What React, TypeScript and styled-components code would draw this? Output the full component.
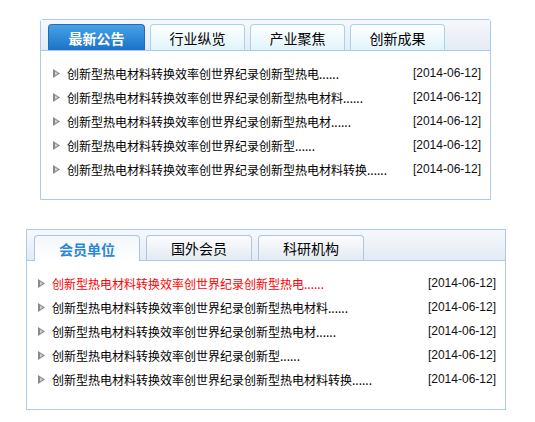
import React from 'react';
import styled, { createGlobalStyle, css } from 'styled-components';

const GlobalStyle = createGlobalStyle`
  html, body {
    margin: 0;
    padding: 0;
    background: #ffffff;
  }
  body {
    font-family: "Liberation Sans", "Noto Sans CJK SC", sans-serif;
    font-size: 12px;
    color: #111;
  }
`;

type NewsItem = { title: string; date: string; hot?: boolean };

const newsItems: NewsItem[] = [
  { title: '创新型热电材料转换效率创世界纪录创新型热电......', date: '[2014-06-12]' },
  { title: '创新型热电材料转换效率创世界纪录创新型热电材料......', date: '[2014-06-12]' },
  { title: '创新型热电材料转换效率创世界纪录创新型热电材......', date: '[2014-06-12]' },
  { title: '创新型热电材料转换效率创世界纪录创新型......', date: '[2014-06-12]' },
  { title: '创新型热电材料转换效率创世界纪录创新型热电材料转换......', date: '[2014-06-12]' },
];

const memberItems: NewsItem[] = newsItems.map((item, i) => ({ ...item, hot: i === 0 }));

const Arrow = () => (
  <svg width="8" height="9" viewBox="0 0 8 9">
    <polygon points="0,0 7,4.5 0,9" fill="#8a8a8a" />
    <polygon points="2,2.5 5,4.5 2,6.5" fill="#d0d0d0" />
  </svg>
);

const App = () => {
  return (
    <>
      <GlobalStyle />
      <Page>
        <NewsPanel>
          <TabBar $variant="news">
            <NewsTab $active>最新公告</NewsTab>
            <NewsTab>行业纵览</NewsTab>
            <NewsTab>产业聚焦</NewsTab>
            <NewsTab>创新成果</NewsTab>
          </TabBar>
          <List $variant="news">
            {newsItems.map((item, i) => (
              <Row key={i}>
                <Bullet>
                  <Arrow />
                </Bullet>
                <Title $hot={item.hot}>{item.title}</Title>
                <DateText>{item.date}</DateText>
              </Row>
            ))}
          </List>
        </NewsPanel>

        <MemberPanel>
          <TabBar $variant="member">
            <MemberTab $active>会员单位</MemberTab>
            <MemberTab>国外会员</MemberTab>
            <MemberTab>科研机构</MemberTab>
          </TabBar>
          <List $variant="member">
            {memberItems.map((item, i) => (
              <Row key={i}>
                <Bullet>
                  <Arrow />
                </Bullet>
                <Title $hot={item.hot}>{item.title}</Title>
                <DateText>{item.date}</DateText>
              </Row>
            ))}
          </List>
        </MemberPanel>
      </Page>
    </>
  );
};

const Page = styled.div`
  display: flex;
  flex-direction: column;
  align-items: flex-start;
  padding-top: 19px;
  width: 535px;
  height: 422px;
  box-sizing: border-box;
`;

const PanelBase = styled.div`
  border: 1px solid #abc9e8;
  background: #ffffff;
  box-sizing: border-box;
`;

const NewsPanel = styled(PanelBase)`
  margin-left: 40px;
  width: 451px;
  height: 181px;
  border-radius: 3px 3px 0 0;
`;

const MemberPanel = styled(PanelBase)`
  margin-left: 26px;
  margin-top: 29px;
  width: 480px;
  height: 181px;
`;

const TabBar = styled.div<{ $variant: 'news' | 'member' }>`
  display: flex;
  align-items: flex-end;
  height: 31px;
  box-sizing: border-box;
  border-bottom: 1px solid #abc9e8;
  background: linear-gradient(#f6f8fb, #e4ebf4);
  padding-left: 7px;
  gap: ${(p) => (p.$variant === 'news' ? '5px' : '6px')};
`;

const TabBase = styled.div<{ $active?: boolean }>`
  display: flex;
  align-items: center;
  justify-content: center;
  box-sizing: border-box;
  border-radius: 4px 4px 0 0;
  font-family: "Noto Sans CJK SC", "Liberation Sans", sans-serif;
  font-size: 14px;
  color: #000;
  cursor: pointer;
`;

const NewsTab = styled(TabBase)`
  width: 95px;
  height: 26px;
  border: 1px solid #a7d2e8;
  border-bottom: none;
  background: linear-gradient(#ffffff, #e0f4fb);
  ${(p) =>
    p.$active &&
    css`
      border-color: #1f6cbc;
      background: linear-gradient(#47a2e6, #1b72c9);
      color: #ffffff;
      font-weight: bold;
      width: 97px;
    `}
`;

const MemberTab = styled(TabBase)`
  width: 106px;
  height: 25px;
  border: 1px solid #abc6e2;
  border-bottom: none;
  background: linear-gradient(#fbfcfe, #e4eaf2);
  ${(p) =>
    p.$active &&
    css`
      height: 26px;
      margin-bottom: -1px;
      background: linear-gradient(#f3f7fb, #ffffff);
      color: #2b86d9;
      font-weight: bold;
    `}
`;

const List = styled.ul<{ $variant: 'news' | 'member' }>`
  list-style: none;
  margin: 0;
  padding: ${(p) => (p.$variant === 'news' ? '10px 9px 0 12px' : '10px 9px 0 11px')};
`;

const Row = styled.li`
  display: flex;
  align-items: center;
  height: 24px;
`;

const Bullet = styled.span`
  display: flex;
  width: 14px;
  flex-shrink: 0;
`;

const Title = styled.span<{ $hot?: boolean }>`
  flex: 1;
  font-family: "Noto Sans CJK SC", "Liberation Sans", sans-serif;
  font-size: 12px;
  white-space: nowrap;
  color: ${(p) => (p.$hot ? '#ff0000' : '#000')};
`;

const DateText = styled.span`
  font-family: "Liberation Sans", Arial, sans-serif;
  font-size: 12px;
  color: #111;
`;

export default App;
